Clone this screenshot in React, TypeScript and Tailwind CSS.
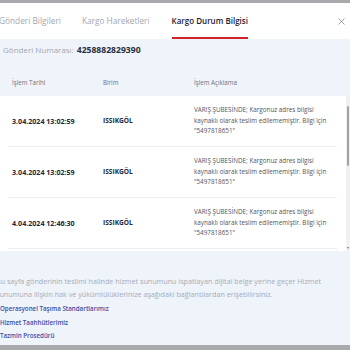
import { X } from 'lucide-react';

const rows = [
  { date: '3.04.2024 13:02:59', unit: 'ISSIKGÖL' },
  { date: '3.04.2024 13:02:59', unit: 'ISSIKGÖL' },
  { date: '4.04.2024 12:46:30', unit: 'ISSIKGÖL' },
];

export default function App() {
  return (
    <div
      className="w-[350px] h-[350px] overflow-hidden bg-[#eff3fa] flex flex-col"
      style={{ fontFamily: '"Open Sans", "DejaVu Sans", sans-serif' }}
    >
      <div className="h-[3px] bg-[#a8a9ac] shrink-0" />

      {/* tabs */}
      <div className="h-[36px] bg-white flex items-stretch shrink-0 -ml-[1px]">
        <div className="flex items-center text-[8.3px] text-[#a3a7b0] pr-[21px]">Gönderi Bilgileri</div>
        <div className="flex items-center text-[8.3px] text-[#a3a7b0] pr-[22px]">Kargo Hareketleri</div>
        <div className="relative flex items-center text-[8px] font-semibold text-[#1e2230]">
          Kargo Durum Bilgisi
          <span className="absolute left-0 right-0 bottom-0 h-[2px] bg-[#d3222a]" />
        </div>
        <div className="ml-auto flex items-center pr-[3px] text-[#555a66]">
          <X size={11} strokeWidth={1.2} />
        </div>
      </div>

      <div className="h-[22px] flex items-center pl-[3px] text-[8px] shrink-0">
        <span className="text-[#a3a7b0]">Gönderi Numarası:</span>
        <span className="ml-[3px] font-bold text-[8.6px] text-[#2a2e3a]">4258882829390</span>
      </div>

      {/* table header */}
      <div className="mt-[8px] h-[27px] flex items-center text-[6.2px] text-[#6c7180] shrink-0">
        <div className="w-[103px] pl-[12px]">İşlem Tarihi</div>
        <div className="w-[91px]">Birim</div>
        <div>İşlem Açıklama</div>
      </div>

      {/* table body */}
      <div className="h-[155px] bg-white flex shrink-0">
        <div className="flex-1 pl-[8px] pr-[9px]">
          {rows.map((r, i) => (
            <div key={i} className="h-[51px] flex items-center border-b border-[#eceef3]">
              <div className="w-[95px] pl-[4px] font-bold text-[7.1px] text-[#23273a]">{r.date}</div>
              <div className="w-[91px] font-bold text-[6.6px] text-[#23273a]">{r.unit}</div>
              <div className="flex-1 text-[6.3px] leading-[10.5px] text-[#50545f] whitespace-nowrap">
                VARIŞ ŞUBESİNDE; Kargonuz adres bilgisi
                <br />
                kaynaklı olarak teslim edilememiştir. Bilgi için
                <br />
                "5497818651"
              </div>
            </div>
          ))}
        </div>
        <div className="w-[4px] bg-[#f1f1f1] flex flex-col items-center pt-[10px] pb-[2px]">
          <div className="w-[2px] h-[60px] bg-[#a3a3a3] rounded-full" />
          <div className="mt-auto w-0 h-0 border-l-[1.5px] border-r-[1.5px] border-t-[2px] border-l-transparent border-r-transparent border-t-[#777]" />
        </div>
      </div>

      {/* footer */}
      <div className="pt-[24px] -ml-[4px] text-[7.2px] leading-[13px] text-[#a8acb6] whitespace-nowrap">
        Bu sayfa gönderinin teslimi halinde hizmet sunumunu ispatlayan dijital belge yerine geçer Hizmet
        <br />
        sunumuna ilişkin hak ve yükümlülüklerinize aşağıdaki bağlantılardan erişebilirsiniz.
      </div>
      <div className="pt-[1px] flex flex-col text-[6.2px] leading-[13.5px] font-semibold text-[#3c4ea5]">
        <a>Operasyonel Taşıma Standartlarımız</a>
        <a>Hizmet Taahhütlerimiz</a>
        <a>Tazmin Prosedürü</a>
      </div>

      <div className="mt-auto h-[5px] bg-[#a8a9ac] shrink-0" />
    </div>
  );
}
